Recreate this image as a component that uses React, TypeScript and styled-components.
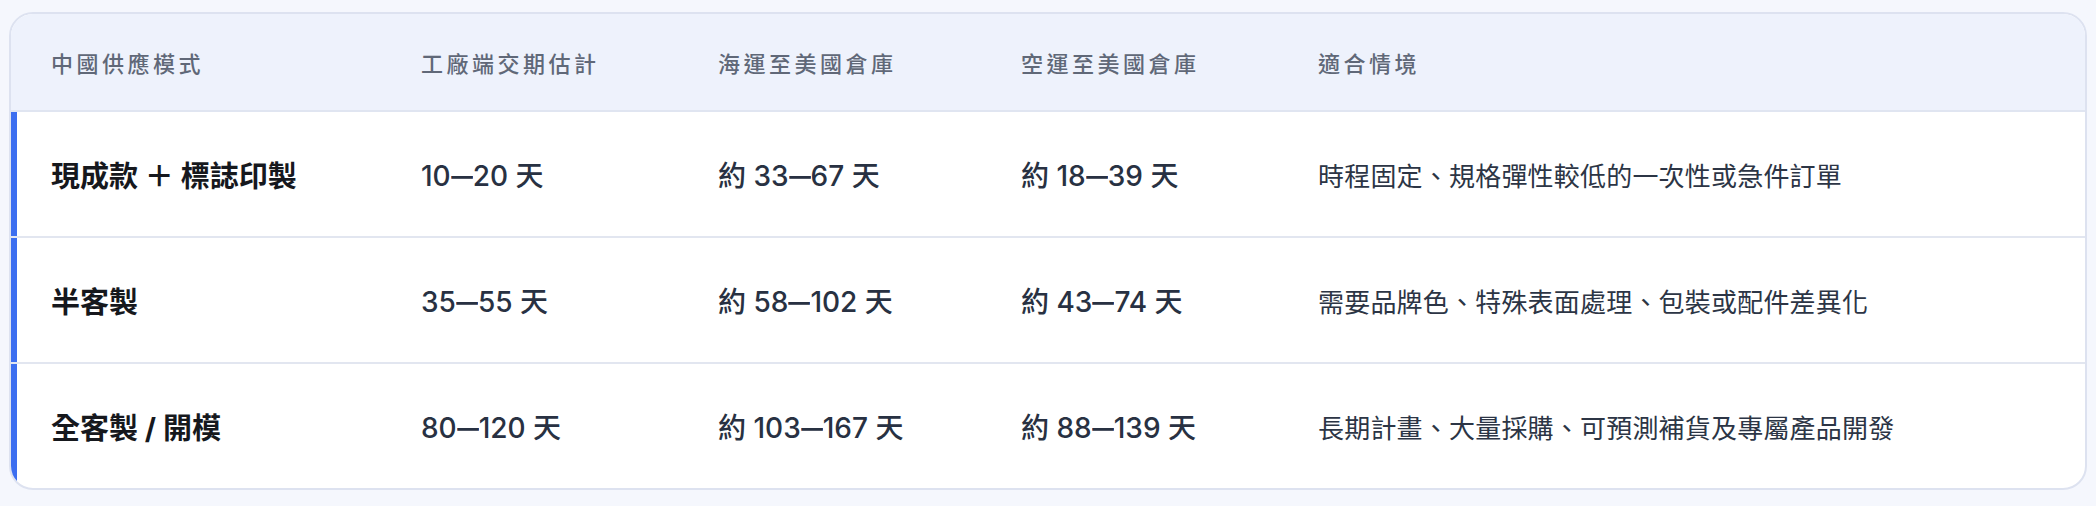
import styled, { createGlobalStyle } from "styled-components";

const GlobalStyle = createGlobalStyle`
  html, body {
    margin: 0;
    padding: 0;
    background: #f5f7fd;
  }
  body {
    font-family: "Inter", "Noto Sans CJK TC", "Noto Sans", sans-serif;
    -webkit-font-smoothing: antialiased;
  }
`;

const rows = [
  {
    mode: "現成款 ＋ 標誌印製",
    factory: ["", "10", "20"],
    sea: ["約 ", "33", "67"],
    air: ["約 ", "18", "39"],
    fit: "時程固定、規格彈性較低的一次性或急件訂單",
  },
  {
    mode: "半客製",
    factory: ["", "35", "55"],
    sea: ["約 ", "58", "102"],
    air: ["約 ", "43", "74"],
    fit: "需要品牌色、特殊表面處理、包裝或配件差異化",
  },
  {
    mode: "全客製 / 開模",
    factory: ["", "80", "120"],
    sea: ["約 ", "103", "167"],
    air: ["約 ", "88", "139"],
    fit: "長期計畫、大量採購、可預測補貨及專屬產品開發",
  },
];

const heads = ["中國供應模式", "工廠端交期估計", "海運至美國倉庫", "空運至美國倉庫", "適合情境"];

const Range = ({ v }: { v: string[] }) => (
  <>
    {v[0]}
    {v[1]}
    <Dash>–</Dash>
    {v[2]} 天
  </>
);

const App = () => {
  return (
    <Page>
      <GlobalStyle />
      <Card>
        <HeadRow>
          {heads.map((h) => (
            <HeadCell key={h}>{h}</HeadCell>
          ))}
        </HeadRow>
        <Body>
          {rows.map((r) => (
            <Row key={r.mode}>
              <Cell $kind="mode">{r.mode}</Cell>
              <Cell>
                <Range v={r.factory} />
              </Cell>
              <Cell>
                <Range v={r.sea} />
              </Cell>
              <Cell>
                <Range v={r.air} />
              </Cell>
              <Cell $kind="fit">{r.fit}</Cell>
            </Row>
          ))}
        </Body>
      </Card>
    </Page>
  );
};

export default App;

const Page = styled.div`
  padding: 12px 9px 16px;
`;

const Card = styled.div`
  border: 2px solid #dde2f0;
  border-radius: 24px;
  background: #ffffff;
  overflow: hidden;
`;

const cols = "370px 297px 303px 297px 1fr";

const HeadRow = styled.div`
  display: grid;
  grid-template-columns: ${cols};
  height: 96px;
  align-items: center;
  background: #eef2fc;
  border-bottom: 2px solid #e0e5f1;
`;

const HeadCell = styled.div`
  padding-left: 40px;
  font-size: 22px;
  font-weight: 500;
  letter-spacing: 3.5px;
  color: #606878;
  white-space: nowrap;
`;

const Body = styled.div`
  box-shadow: inset 6px 0 0 #3c6ef0;
`;

const Row = styled.div`
  display: grid;
  grid-template-columns: ${cols};
  height: 124px;
  align-items: center;
  & + & {
    border-top: 2px solid #e2e6f0;
  }
`;

const Cell = styled.div<{ $kind?: "mode" | "fit" }>`
  padding-left: 40px;
  white-space: nowrap;
  font-size: ${(p) => (p.$kind === "fit" ? "26px" : p.$kind === "mode" ? "29px" : "28px")};
  letter-spacing: ${(p) => (p.$kind === "fit" ? "0.2px" : "0")};
  font-weight: ${(p) => (p.$kind === "mode" ? 700 : p.$kind === "fit" ? 400 : 500)};
  color: ${(p) => (p.$kind === "mode" ? "#16181d" : p.$kind === "fit" ? "#2c3545" : "#283142")};
`;

const Dash = styled.span`
  display: inline-block;
  margin: 0 4px;
  transform: scaleX(1.55);
`;
